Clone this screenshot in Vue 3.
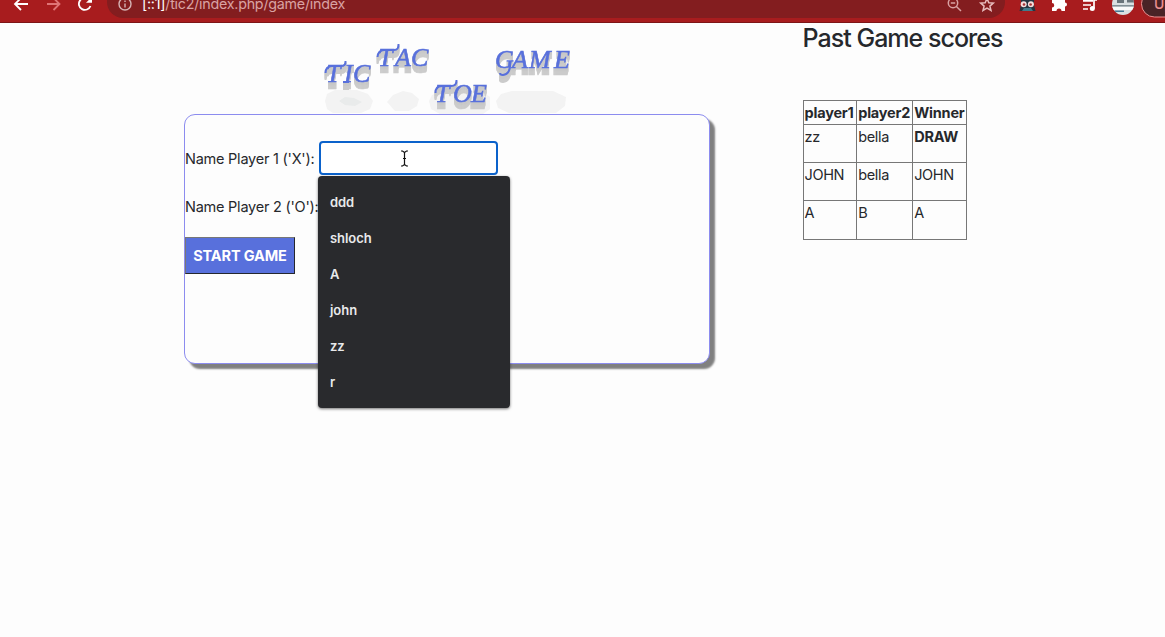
<script setup>
const suggestions = ['ddd', 'shloch', 'A', 'john', 'zz', 'r']
const scores = [
  { one: 'zz', two: 'bella', winner: 'DRAW', draw: true },
  { one: 'JOHN', two: 'bella', winner: 'JOHN' },
  { one: 'A', two: 'B', winner: 'A' },
]
</script>

<template>
  <div class="window">
    <header class="toolbar">
      <svg class="nav" width="107" height="22" viewBox="0 0 107 22" fill="none" stroke-width="1.8">
        <path d="M28 4H15.5M21 -2L15 4L21 10" stroke="#fff" />
        <path d="M47 4H59M53.500 -2L59.500 4L53.500 10" stroke="#df7476" />
        <path d="M89 -.5A6 6 0 1 0 90.500 6" stroke="#fff" />
        <path d="M86 2.700H92V-3Z" fill="#fff" />
      </svg>
      <div class="address">
        <svg class="info" width="14" height="14" viewBox="0 0 14 14" fill="none" stroke="#d5b3b4" stroke-width="1.4">
          <circle cx="7" cy="6" r="6" />
          <path d="M7 5.500V9.500M7 2.500V4" />
        </svg>
        <span class="url"><b>[::1]</b>/tic2/index.php/game/index</span>
        <svg class="tools" width="60" height="20" viewBox="0 0 60 20" fill="none" stroke="#d9a2a3" stroke-width="1.5">
          <circle cx="8" cy="3" r="4.700" />
          <path d="M11.200 6.200L16 11M5.800 3H10.200" />
          <path d="M42 -1.500L43.800 2.700L48.300 3.100L44.900 6.100L46 10.500L42 8.100L38 10.500L39.100 6.100L35.700 3.100L40.200 2.700Z" stroke="#e7bcbd" />
        </svg>
      </div>
      <svg class="extensions" width="160" height="22" viewBox="0 0 160 22">
        <path d="M14.500 11L16 5V0H29V5L30.500 11Z" fill="#253440" />
        <path d="M17 11L19 8H26L28 11Z" fill="#407b8b" />
        <circle cx="18.700" cy="4.300" r="3" fill="#f5dedd" />
        <circle cx="25.900" cy="4.300" r="3" fill="#f5dedd" />
        <circle cx="19" cy="4.500" r="1.300" fill="#a43134" />
        <circle cx="25.600" cy="4.500" r="1.300" fill="#a43134" />
        <path d="M47 0H60V2.500A2 2 0 0 1 60 6.500V11H56.500A2.500 2.500 0 0 0 51.500 11H47V7.500A2 2 0 0 0 47 3Z" fill="#fff" />
        <path d="M78 .8H88M78 5H86M78 9H83M89 8.500V0H92" stroke="#fff" stroke-width="1.700" fill="none" />
        <circle cx="87.300" cy="8.500" r="2.500" fill="#fff" />
        <clipPath id="avatar"><circle cx="118" cy="4" r="11" /></clipPath>
        <g clip-path="url(#avatar)">
          <path d="M106 0H130V16H106Z" fill="#d9e0e2" />
          <path d="M112 0H119V3H112ZM122 0H129V2.500H122Z" fill="#68747a" />
          <path d="M107 5H129V6.500H107Z" fill="#829096" />
          <path d="M107 7H129V10H107Z" fill="#f8fafa" />
          <path d="M110 10.500H119V12H110Z" fill="#467994" />
        </g>
        <rect x="136.500" y="-9.500" width="60" height="26.500" rx="13" fill="#492326" stroke="#ed8f90" />
        <text x="149" y="9" class="update">Up</text>
      </svg>
    </header>

    <main class="page">
      <section class="game">
        <svg class="logo" width="270" height="91" viewBox="0 0 270 91">
          <g fill="#f3f3f3">
            <path d="M17 78L19 71L27 67H49L60 71L65 78L62 86L53 90H25L19 86Z" />
            <path d="M79 79L85 72L95 68L104 70L111 76L109 83L101 88H87Z" />
            <path d="M121 78L124 72L133 68H173L182 74V86L175 91H132L123 86Z" />
            <path d="M188 78L193 71L204 68H245L258 74L257 83L248 90H201L190 85Z" />
          </g>
          <path d="M31 78L37 74L46 75L54 79L47 83L37 82Z" fill="#e9ebeb" />
          <g class="word"><text x="18 36 45" y="59">TIC</text><path d="M17.500 50Q17.500 43.500 24 43H33Q38 43 37.500 38M35 59H41" /></g>
          <g class="word"><text x="70 87 103" y="43">TAC</text><path d="M69.500 34Q70 27.500 76 27H86Q91 27 90.500 21" /></g>
          <g class="word"><text x="127 145 163" y="79">TOE</text><path d="M127.500 70Q127 63.500 134 63H143Q149 63 148.500 57" /></g>
          <g class="word"><text x="187 204 221 246" y="45">GAME</text><path d="M202 39Q203 51 195 52Q192 52 192 50" /></g>
        </svg>

        <form class="card" @submit.prevent>
          <div class="field">
            <label class="name" for="player-x">Name Player 1 ('X'):</label>
            <div class="control">
              <input id="player-x" type="text" autocomplete="off" />
              <svg class="caret" width="9" height="17" viewBox="0 0 9 17" fill="none" stroke="#111" stroke-width="1.200">
                <path d="M1 1H2.500L4.500 2.500L6.500 1H8M4.500 2.500V14.500M3 8.500H6M1 16H2.500L4.500 14.500L6.500 16H8" />
              </svg>
              <ul class="suggestions">
                <li v-for="name in suggestions" :key="name">{{ name }}</li>
              </ul>
            </div>
          </div>
          <div class="field second">
            <label class="name">Name Player 2 ('O'):</label>
          </div>
          <button class="start">START GAME</button>
        </form>
      </section>

      <aside class="history">
        <h1>Past Game scores</h1>
        <table>
          <colgroup><col class="c1" /><col class="c2" /><col class="c3" /></colgroup>
          <thead>
            <tr><th>player1</th><th>player2</th><th>Winner</th></tr>
          </thead>
          <tbody>
            <tr v-for="(score, i) in scores" :key="i">
              <td>{{ score.one }}</td>
              <td>{{ score.two }}</td>
              <td :class="{ draw: score.draw }">{{ score.winner }}</td>
            </tr>
          </tbody>
        </table>
      </aside>
    </main>
  </div>
</template>

<style>
body { margin: 0; background: #fdfdfd; }
</style>

<style scoped>
.window { height: 637px; overflow: hidden; background: #fdfdfd; color: #26282c; font-family: Inter, "Liberation Sans", sans-serif; font-size: 14.5px; }
.toolbar { box-sizing: border-box; height: 23px; display: flex; background: #a81c1e; border-bottom: 1px solid #7d1517; }
.nav, .extensions { flex: none; display: block; }
.address { width: 898px; height: 18px; flex: none; display: flex; background: #831d1f; border-radius: 0 0 16px 16px; }
.info { margin: -2px 0 0 11px; flex: none; }
.url { margin-left: 10px; line-height: 18px; height: 18px; margin-top: -5px; font-size: 14.3px; letter-spacing: -.25px; color: #d9a2a3; white-space: nowrap; }
.url b { font-weight: 400; color: #fff; }
.tools { margin-left: auto; margin-right: 0; }
.update { font: 500 14px Inter, sans-serif; fill: #ed8f90; }

.page { display: flex; }
.game { width: 526px; margin-left: 184px; }
.logo { display: block; margin-left: 124px; }
.word { font: italic 26px "Liberation Serif", serif; fill: #5870dc; stroke: #5870dc; stroke-width: .5; filter: drop-shadow(0 1px 0 #c8c8c8) drop-shadow(0 2px 0 #c8c8c8) drop-shadow(0 4px 0 #cbcbcb); }
.word path { fill: none; stroke-width: 2; }

.card { box-sizing: border-box; width: 526px; height: 250px; padding-top: 26px; border: 1px solid #8c8cef; border-radius: 11px; box-shadow: 5px 5px 2px #808080; background: #fdfdfd; }
.field { display: flex; height: 34px; line-height: 34px; white-space: nowrap; }
.name { width: 134px; flex: none; line-height: 35px; letter-spacing: -.24px; }
.second { margin-top: 14px; }
.control { position: relative; width: 179px; height: 34px; }
input { box-sizing: border-box; display: block; width: 179px; height: 34px; border: 2px solid #0b62cb; border-radius: 4px; background: #fff; outline: none; }
.caret { position: absolute; left: 81px; top: 9px; }
.suggestions { position: absolute; left: -1px; top: 35px; z-index: 2; box-sizing: border-box; width: 192px; height: 232px; margin: 0; padding: 8px 12px; list-style: none; background: #292a2d; border-radius: 4px; box-shadow: 0 1px 3px rgba(0, 0, 0, .55); color: #e8e9eb; font-size: 13px; font-weight: 600; letter-spacing: -.05px; }
.suggestions li { height: 36px; line-height: 37px; }
.start { box-sizing: border-box; display: block; width: 110px; height: 37px; margin-top: 14px; padding: 0; border: 1px solid; border-color: #777 #25272e #25272e #777; background: #5870dc; color: #fff; font: 700 14.5px Inter, sans-serif; letter-spacing: -.14px; white-space: nowrap; }

.history { margin-left: 92.5px; }
h1 { margin: 0; height: 77px; font-size: 25px; line-height: 31px; font-weight: 500; letter-spacing: -.97px; white-space: nowrap; }
table { width: 164px; table-layout: fixed; border-collapse: collapse; }
.c1 { width: 53px; }
.c2 { width: 56px; }
.c3 { width: 54px; }
th, td { box-sizing: border-box; border: 1px solid #777; padding: 1px 0 1px 1px; text-align: left; white-space: nowrap; line-height: 22px; }
th { height: 24px; padding: 0 0 0 1px; font-weight: 700; letter-spacing: -.2px; }
td { height: 38px; vertical-align: top; letter-spacing: -.35px; }
th + th, td + td { padding-left: 1.7px; }
tr:last-child td { height: 39px; }
.draw { font-weight: 700; letter-spacing: -.2px; }
</style>
